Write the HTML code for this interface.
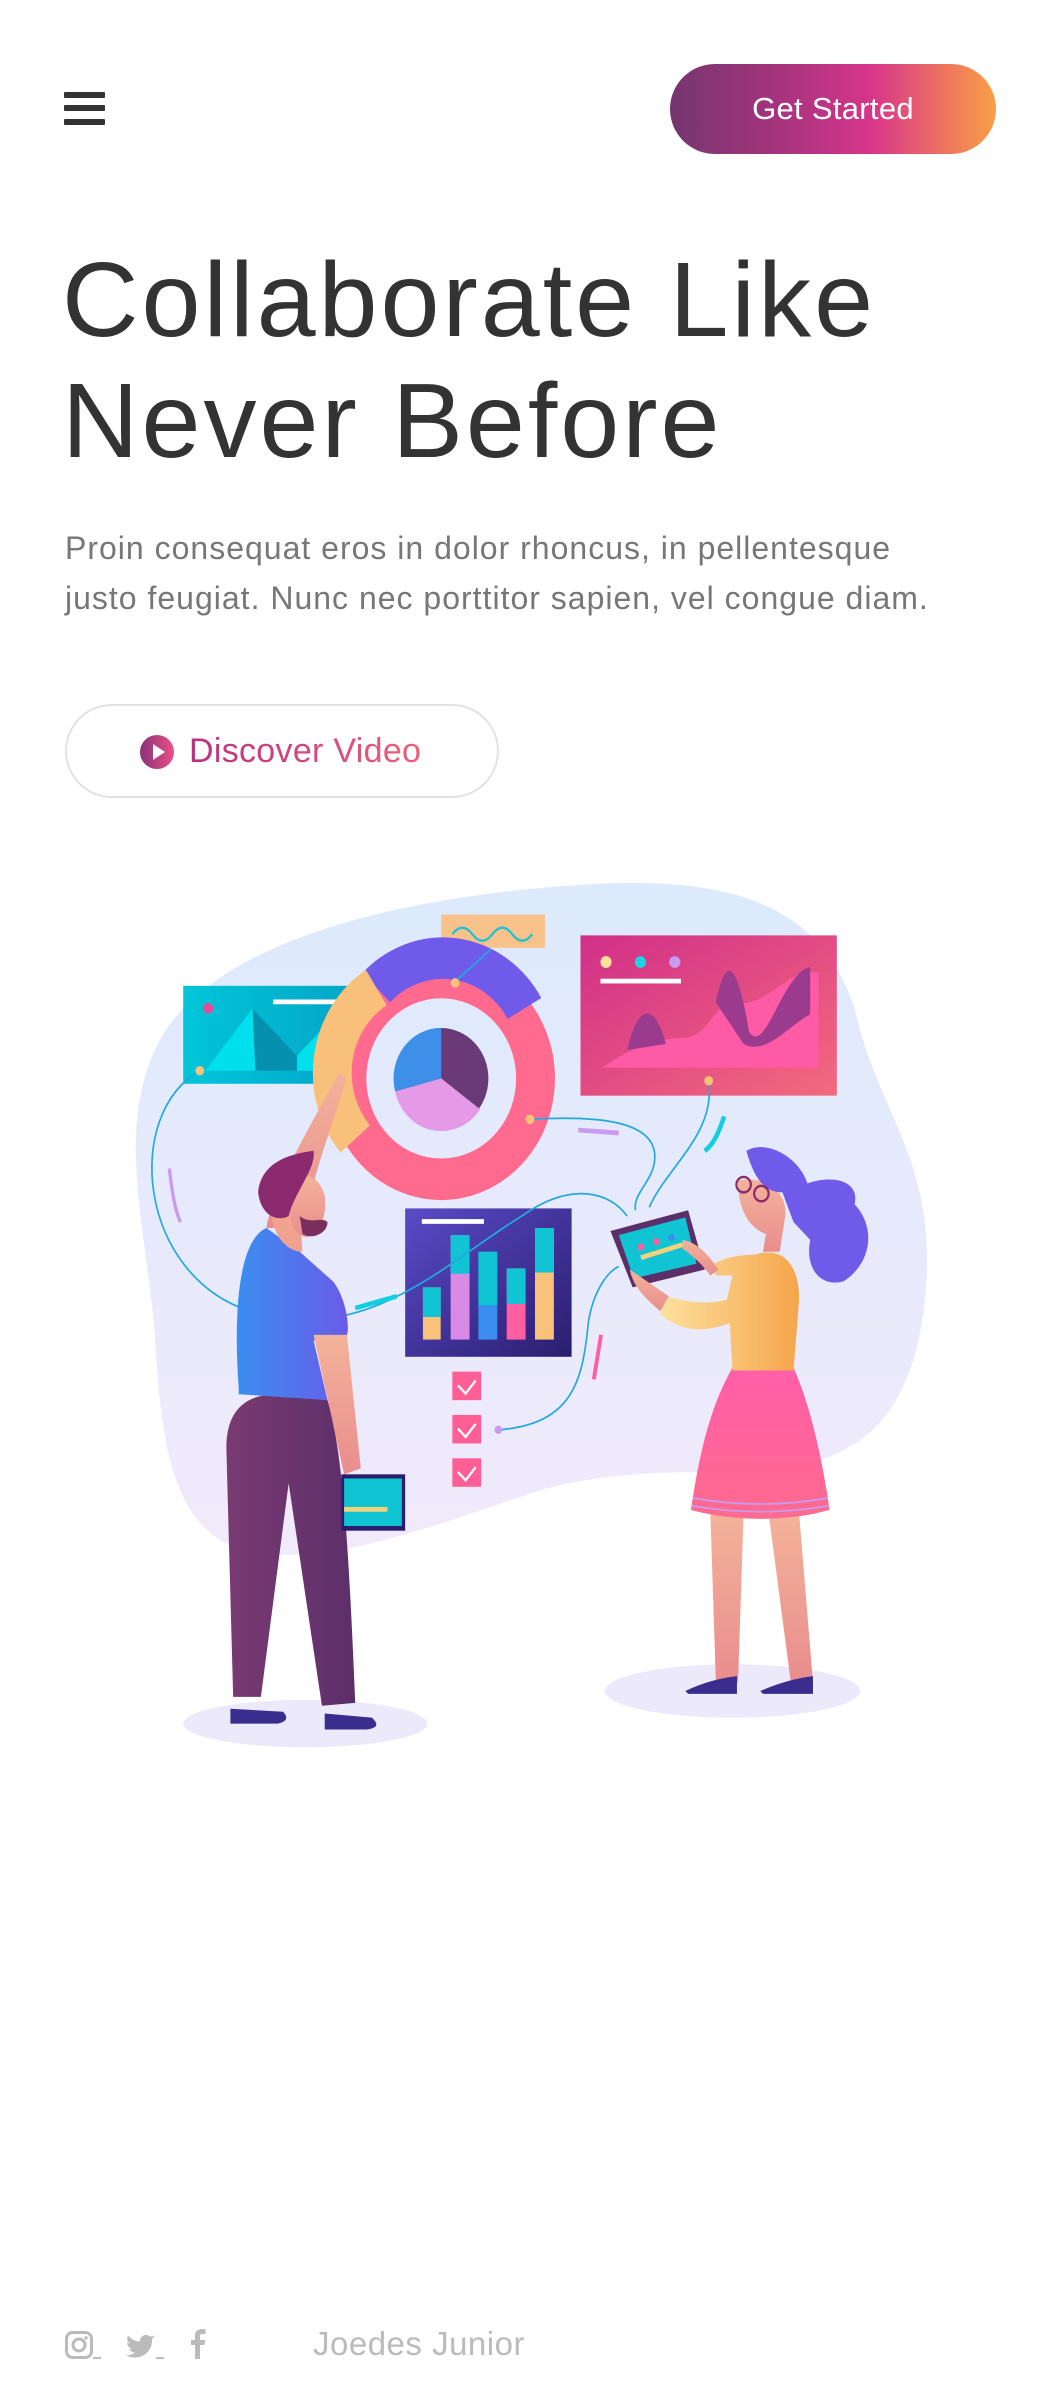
<!DOCTYPE html>
<html><head><meta charset="utf-8">
<style>
*{margin:0;padding:0;box-sizing:border-box}
html,body{width:1060px;height:2400px;background:#fff;overflow:hidden;font-family:"Liberation Sans",sans-serif}
.abs{position:absolute}
.bar{position:absolute;left:64px;width:41px;height:6px;background:#333;border-radius:1px}
.btn{left:670px;top:64px;width:326px;height:90px;border-radius:45px;background:linear-gradient(90deg,#74366f 0%,#b03480 40%,#d8358a 62%,#ec6e63 82%,#f9a046 100%);color:#fff;font-size:31px;display:flex;align-items:center;justify-content:center;letter-spacing:0.3px}
h1{position:absolute;left:62px;top:240px;font-size:106px;font-weight:normal;color:#333;line-height:121px;letter-spacing:3px}
p.lead{position:absolute;left:65px;top:523px;font-size:32px;color:#777;line-height:50px;width:1000px;letter-spacing:1px;white-space:nowrap}
.disc{left:65px;top:704px;width:434px;height:94px;border:2px solid #e2e2e2;border-radius:47px}
.disc span{position:absolute;left:122px;top:26px;font-size:34px;background:linear-gradient(90deg,#b8327f,#ee5f78);-webkit-background-clip:text;color:transparent;letter-spacing:0.3px}
.foot{top:2325px;left:313px;font-size:33px;color:#bbb;letter-spacing:0.5px}
</style></head><body>
<div class="bar" style="top:92px"></div>
<div class="bar" style="top:105px"></div>
<div class="bar" style="top:119px"></div>
<div class="abs btn">Get Started</div>
<h1>Collaborate Like<br>Never Before</h1>
<p class="lead">Proin consequat eros in dolor rhoncus, in pellentesque<br>justo feugiat. Nunc nec porttitor sapien, vel congue diam.</p>
<div class="abs disc">
<svg class="abs" style="left:73px;top:29px" width="34" height="34" viewBox="0 0 34 34"><defs><linearGradient id="pg" x1="0" x2="1"><stop offset="0" stop-color="#8a3278"/><stop offset="1" stop-color="#ec4f86"/></linearGradient></defs><circle cx="17" cy="17" r="17" fill="url(#pg)"/><path d="M13 9 L25 17 L13 25Z" fill="#fff"/></svg>
<span>Discover Video</span></div>

<svg class="abs" style="left:100px;top:860px" width="860" height="920" viewBox="0 0 1550 1550" preserveAspectRatio="none">
<defs>
<linearGradient id="blob" x1="0" y1="0" x2="0" y2="1"><stop offset="0" stop-color="#dceafc"/><stop offset="1" stop-color="#f1eafb"/></linearGradient>
<linearGradient id="teal" x1="0" x2="1"><stop offset="0" stop-color="#00c6d8"/><stop offset="1" stop-color="#05a6c8"/></linearGradient>
<linearGradient id="pinkp" x1="0" x2="1" y1="0" y2="1"><stop offset="0" stop-color="#d12f88"/><stop offset="1" stop-color="#f36a7e"/></linearGradient>
<linearGradient id="navy" x1="0" x2="1" y1="0" y2="1"><stop offset="0" stop-color="#5a4bc8"/><stop offset="1" stop-color="#2b1d6e"/></linearGradient>
<linearGradient id="shirt" x1="0" x2="1"><stop offset="0" stop-color="#3a8ef0"/><stop offset="1" stop-color="#6a5be8"/></linearGradient>
<linearGradient id="pants" x1="0" x2="1"><stop offset="0" stop-color="#7a3a72"/><stop offset="1" stop-color="#5c2f6a"/></linearGradient>
<linearGradient id="skirt" x1="0" x2="0" y1="0" y2="1"><stop offset="0" stop-color="#ff5fa8"/><stop offset="1" stop-color="#ff6a8f"/></linearGradient>
<linearGradient id="top" x1="0" x2="1"><stop offset="0" stop-color="#fde1a0"/><stop offset="1" stop-color="#f5a54a"/></linearGradient>
<linearGradient id="skin" x1="0" x2="0" y1="0" y2="1"><stop offset="0" stop-color="#f3b39a"/><stop offset="1" stop-color="#e98d8d"/></linearGradient>
</defs>
<path d="M110 300 C200 150 500 60 900 40 C1150 30 1300 80 1360 250 C1400 420 1500 500 1490 700 C1480 900 1400 980 1300 1010 C1150 1050 1000 1010 800 1060 C600 1120 400 1200 250 1160 C120 1120 110 950 100 820 C90 640 20 450 110 300Z" fill="url(#blob)"/>
<ellipse cx="370" cy="1455" rx="220" ry="40" fill="#ece9fb"/>
<ellipse cx="1140" cy="1400" rx="230" ry="45" fill="#ece9fb"/>
<rect x="150" y="212" width="298" height="165" fill="url(#teal)"/>
<path d="M190 355 L275 250 L355 330 L410 275 L410 355Z" fill="#00e0ec"/><path d="M275 250 L355 330 L355 355 L280 355Z" fill="#0690b0"/>
<rect x="312" y="235" width="115" height="8" fill="#fff"/><circle cx="195" cy="250" r="9" fill="#e84a9a"/>
<rect x="615" y="92" width="187" height="56" fill="#f8c28a"/><path d="M635 125 q18 -22 36 0 t36 0 t36 0 t36 0" stroke="#1cc3d6" stroke-width="4" fill="none"/>
<rect x="866" y="127" width="462" height="270" fill="url(#pinkp)"/>
<path d="M905 350 C950 320 1000 300 1050 300 C1100 300 1110 230 1150 240 C1200 250 1240 180 1295 190 L1295 350Z" fill="#ff5aa6"/>
<path d="M950 320 C970 240 1000 240 1020 310 Z M1110 240 C1130 150 1150 180 1170 290 C1200 330 1230 190 1280 180 L1280 260 C1240 280 1200 330 1160 310Z" fill="#9b3b8e"/>
<circle cx="912" cy="172" r="10" fill="#fce29b"/><circle cx="974" cy="172" r="10" fill="#1fd3e0"/><circle cx="1036" cy="172" r="10" fill="#c89af0"/>
<rect x="902" y="200" width="145" height="8" fill="#fff"/>
<circle cx="615" cy="368" r="170" fill="none" stroke="#ff6a8e" stroke-width="70"/>
<path d="M498 215 A170 170 0 0 1 765 250" fill="none" stroke="#6f5ae9" stroke-width="70"/>
<path d="M460 470 A170 170 0 0 1 498 215" fill="none" stroke="#f8c07b" stroke-width="70"/>
<circle cx="615" cy="368" r="85" fill="#6a3a78"/>
<path d="M615 368 L615 283 A85 85 0 0 0 532 390Z" fill="#3d8fe8"/>
<path d="M615 368 L532 390 A85 85 0 0 0 685 420Z" fill="#e59ae8"/>
<rect x="550" y="587" width="300" height="250" fill="url(#navy)"/>
<rect x="580" y="605" width="112" height="8" fill="#fff"/>
<rect x="582" y="720" width="32" height="88" fill="#f8c27a"/><rect x="632" y="632" width="34" height="176" fill="#d98ae5"/><rect x="682" y="660" width="34" height="148" fill="#3a8ef0"/><rect x="733" y="688" width="34" height="120" fill="#ff5fa0"/><rect x="784" y="620" width="34" height="188" fill="#f8c27a"/>
<rect x="582" y="720" width="32" height="50" fill="#10c4d4"/><rect x="632" y="632" width="34" height="65" fill="#10c4d4"/><rect x="682" y="660" width="34" height="90" fill="#10c4d4"/><rect x="733" y="688" width="34" height="60" fill="#10c4d4"/><rect x="784" y="620" width="34" height="75" fill="#10c4d4"/>
<g fill="#ff5f95"><rect x="635" y="862" width="52" height="48"/><rect x="635" y="935" width="52" height="48"/><rect x="635" y="1008" width="52" height="48"/></g>
<g stroke="#fff" stroke-width="4" fill="none"><path d="M645 885 l14 14 l18 -22"/><path d="M645 958 l14 14 l18 -22"/><path d="M645 1031 l14 14 l18 -22"/></g>
<g stroke="#22a9e0" stroke-width="3" fill="none">
<path d="M180 355 C40 430 70 700 270 760 C480 820 620 680 760 600 C850 540 920 560 950 600"/>
<path d="M775 437 C900 430 1000 440 1000 500 C1000 540 960 560 965 590"/>
<path d="M1097 375 C1110 460 1020 520 990 585"/>
<path d="M720 960 C850 950 870 880 880 780 C890 720 920 690 935 685"/>
<path d="M640 205 L705 150"/></g>
<circle cx="640" cy="207" r="8" fill="#f8c27a"/><circle cx="775" cy="437" r="8" fill="#f8c27a"/><circle cx="1097" cy="372" r="8" fill="#f8c27a"/><circle cx="180" cy="355" r="8" fill="#f8c27a"/><circle cx="718" cy="960" r="7" fill="#c89af0"/>
<path d="M125 520 C130 560 135 590 145 610" stroke="#c89af0" stroke-width="6" fill="none"/>
<path d="M862 455 L935 460" stroke="#c89af0" stroke-width="8"/>
<path d="M1125 432 C1115 460 1105 480 1090 490" stroke="#10d0e0" stroke-width="8" fill="none"/>
<path d="M460 755 L535 735" stroke="#10d0e0" stroke-width="8"/>
<path d="M903 800 L890 875" stroke="#ff5fa0" stroke-width="7"/>
<path d="M240 1410 L228 1000 C225 940 250 900 320 900 L410 910 C440 1000 450 1200 460 1420 L400 1425 L340 1050 L290 1410Z" fill="url(#pants)"/>
<path d="M235 1430 L330 1435 Q345 1450 320 1455 L235 1455Z M405 1438 L490 1445 Q510 1462 480 1465 L405 1465Z" fill="#3b2d8e"/>
<path d="M250 890 C240 760 250 640 300 620 L360 660 L420 710 C445 740 450 790 445 800 L385 810 L410 910 L250 900Z" fill="url(#shirt)"/>
<path d="M385 800 L445 800 L470 1025 L440 1035Z" fill="url(#skin)"/>
<path d="M300 620 C310 560 360 480 430 360 L445 365 C420 450 380 530 370 620 Z" fill="url(#skin)"/>
<path d="M310 560 C300 620 330 660 365 660 L360 600Z" fill="#f0a38f"/>
<path d="M340 560 C345 520 390 520 405 565 C410 600 395 635 370 635 C345 630 340 600 340 560Z" fill="url(#skin)"/>
<path d="M285 560 C290 510 340 495 385 490 C390 520 350 560 340 600 C320 610 290 600 285 560Z" fill="#8b2a6e"/>
<path d="M360 600 C380 615 400 600 410 610 C410 630 380 640 365 630Z" fill="#7a2e5e"/>
<rect x="435" y="1035" width="115" height="95" fill="#2b1d6e"/><rect x="440" y="1042" width="104" height="80" fill="#10c4d4"/><rect x="440" y="1090" width="78" height="8" fill="#f8d27a"/>
<path d="M1100 1100 L1160 1100 L1150 1385 L1110 1385Z M1205 1100 L1260 1100 L1285 1385 L1245 1385Z" fill="url(#skin)"/>
<path d="M1055 1400 Q1100 1380 1148 1375 L1148 1405 L1060 1405Z M1190 1400 Q1240 1380 1285 1375 L1285 1405 L1195 1405Z" fill="#3b2d8e"/>
<path d="M1140 855 L1250 855 C1280 920 1300 1000 1315 1095 C1240 1115 1140 1115 1065 1095 C1080 1000 1100 920 1140 855Z" fill="url(#skirt)"/>
<path d="M1068 1075 Q1190 1095 1312 1075 M1066 1088 Q1190 1108 1314 1088" stroke="#c89af0" stroke-width="3" fill="none"/>
<path d="M1180 665 C1230 650 1260 680 1260 740 L1250 860 L1140 860 L1135 780 C1080 800 1040 790 1010 765 L1020 735 C1060 745 1100 750 1130 740 L1140 700 L1110 700 L1100 685 C1120 670 1150 665 1180 665Z" fill="url(#top)"/>
<path d="M1150 540 C1150 590 1170 620 1200 630 L1195 660 L1225 660 L1235 600 C1240 560 1200 530 1150 540Z" fill="url(#skin)"/>
<path d="M1165 490 C1200 470 1260 500 1275 545 C1320 530 1370 540 1360 580 C1400 620 1390 680 1340 710 C1300 720 1270 690 1280 640 L1250 610 L1230 560 C1200 560 1180 540 1165 490Z" fill="#6f5ae9"/>
<circle cx="1160" cy="547" r="13" fill="none" stroke="#8b2a6e" stroke-width="4"/><circle cx="1192" cy="562" r="13" fill="none" stroke="#8b2a6e" stroke-width="4"/>
<path d="M920 625 L1060 590 L1090 690 L960 720Z" fill="#5b2f6a"/><path d="M935 632 L1055 602 L1075 680 L962 705Z" fill="#10c4d4"/>
<circle cx="975" cy="652" r="6" fill="#ff5fa0"/><circle cx="1003" cy="643" r="6" fill="#ff5fa0"/><circle cx="1030" cy="636" r="6" fill="#3a8ef0"/>
<path d="M975 670 L1050 648" stroke="#f8d27a" stroke-width="8"/>
<path d="M955 690 C960 720 990 745 1010 760 L1025 735 Z" fill="url(#skin)"/>
<path d="M1050 640 C1080 645 1100 670 1115 690 L1100 700 C1085 680 1065 665 1050 655Z" fill="url(#skin)"/>
</svg>

<svg class="abs" style="left:65px;top:2331px" width="36" height="28" viewBox="0 0 36 28"><rect x="1.5" y="1.5" width="25" height="25" rx="6" fill="none" stroke="#bbb" stroke-width="3"/><circle cx="14" cy="14" r="6" fill="none" stroke="#bbb" stroke-width="3"/><circle cx="21" cy="7" r="1.7" fill="#bbb"/><rect x="28" y="26" width="8" height="2" fill="#bbb"/></svg>
<svg class="abs" style="left:126px;top:2332px" width="38" height="28" viewBox="0 0 38 28"><path d="M28 3 c-1.5 1 -3 1.5 -4 1.5 a6 6 0 0 0 -10 5 a16 16 0 0 1 -12 -6 a6 6 0 0 0 2 8 a6 6 0 0 1 -3 -1 a6 6 0 0 0 5 6 a6 6 0 0 1 -3 0 a6 6 0 0 0 6 4 a12 12 0 0 1 -9 2.5 a17 17 0 0 0 26 -15 l0 -1 c1.2 -1 2.2 -2 3 -3.2 c-1 .5 -2.2 .8 -3.4 .9 c1.2 -.7 2.2 -1.8 2.4 -3z" fill="#bbb"/><rect x="30" y="25" width="8" height="2" fill="#bbb"/></svg>
<svg class="abs" style="left:190px;top:2328px" width="16" height="31" viewBox="0 0 16 31"><path d="M10 31 V17 h4.5 l.7 -5 H10 V8.5 c0 -1.5 .5 -2.5 2.6 -2.5 H15.5 V1.3 C15 1.2 13.4 1 11.6 1 C7.7 1 5 3.4 5 7.8 V12 H1 v5 h4 v14z" fill="#bbb"/></svg>
<div class="abs foot">Joedes Junior</div>
</body></html>
